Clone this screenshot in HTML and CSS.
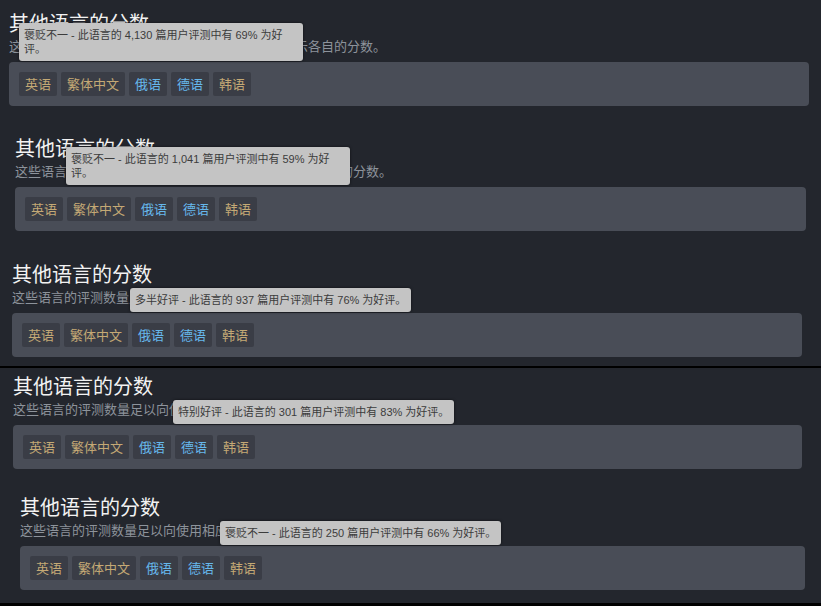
FILE: index.html
```html
<!DOCTYPE html>
<html lang="zh-CN">
<head>
    <meta charset="UTF-8">
    <meta name="viewport" content="width=device-width, initial-scale=1.0">
    <title>其他语言的分数</title>
    <link rel="stylesheet" href="styles.css">
</head>
<body>
    <div class="page">
        <!-- 截图 1 -->
        <section class="shot shot-1">
            <h2 class="title">其他语言的分数</h2>
            <p class="desc">这些语言的评测数量足以向使用相应语言的用户显示各自的分数。</p>
            <div class="langs">
                <span class="lang gold">英语</span>
                <span class="lang gold">繁体中文</span>
                <span class="lang blue">俄语</span>
                <span class="lang blue">德语</span>
                <span class="lang gold">韩语</span>
            </div>
            <div class="tip tip-wrap">褒贬不一 - 此语言的 4,130 篇用户评测中有 69% 为好评。</div>
        </section>

        <!-- 截图 2 -->
        <section class="shot shot-2">
            <h2 class="title">其他语言的分数</h2>
            <p class="desc">这些语言的评测数量足以向使用相应语言的用户显示各自的分数。</p>
            <div class="langs">
                <span class="lang gold">英语</span>
                <span class="lang gold">繁体中文</span>
                <span class="lang blue">俄语</span>
                <span class="lang blue">德语</span>
                <span class="lang gold">韩语</span>
            </div>
            <div class="tip tip-wrap">褒贬不一 - 此语言的 1,041 篇用户评测中有 59% 为好评。</div>
        </section>

        <!-- 截图 3 -->
        <section class="shot shot-3">
            <h2 class="title">其他语言的分数</h2>
            <p class="desc">这些语言的评测数量足以向使用相应语言的用户显示各自的分数。</p>
            <div class="langs">
                <span class="lang gold">英语</span>
                <span class="lang gold">繁体中文</span>
                <span class="lang blue">俄语</span>
                <span class="lang blue">德语</span>
                <span class="lang gold">韩语</span>
            </div>
            <div class="tip">多半好评 - 此语言的 937 篇用户评测中有 76% 为好评。</div>
        </section>

        <!-- 截图 4 -->
        <section class="shot shot-4">
            <h2 class="title">其他语言的分数</h2>
            <p class="desc">这些语言的评测数量足以向使用相应语言的用户显示各自的分数。</p>
            <div class="langs">
                <span class="lang gold">英语</span>
                <span class="lang gold">繁体中文</span>
                <span class="lang blue">俄语</span>
                <span class="lang blue">德语</span>
                <span class="lang gold">韩语</span>
            </div>
            <div class="tip">特别好评 - 此语言的 301 篇用户评测中有 83% 为好评。</div>
        </section>

        <!-- 截图 5 -->
        <section class="shot shot-5">
            <h2 class="title">其他语言的分数</h2>
            <p class="desc">这些语言的评测数量足以向使用相应语言的用户显示各自的分数。</p>
            <div class="langs">
                <span class="lang gold">英语</span>
                <span class="lang gold">繁体中文</span>
                <span class="lang blue">俄语</span>
                <span class="lang blue">德语</span>
                <span class="lang gold">韩语</span>
            </div>
            <div class="tip">褒贬不一 - 此语言的 250 篇用户评测中有 66% 为好评。</div>
        </section>
    </div>
</body>
</html>
```

FILE: styles.css
```css
body {
    margin: 0;
    background-color: #000;
    font-family: "Liberation Sans", Arial, "Noto Sans CJK SC", sans-serif;
}
.page {
    width: 821px;
    height: 606px;
    overflow: hidden;
    background-color: #000;
}
.shot {
    position: relative;
    box-sizing: border-box;
    background-color: #23262d;
}
.shot-1 {
    height: 120px;
    padding: 9px 12px 0 9px;
}
.shot-2 {
    height: 125px;
    padding: 14px 15px 0 15px;
}
.shot-3 {
    height: 121px;
    padding: 15px 19px 0 12px;
    margin-bottom: 2px;
}
.shot-4 {
    height: 112px;
    padding: 4px 19px 0 13px;
}
.shot-5 {
    height: 123px;
    padding: 13px 16px 0 20px;
}
.title {
    margin: 0;
    font-family: "Noto Sans CJK SC", sans-serif;
    font-size: 20px;
    font-weight: normal;
    line-height: 28px;
    color: #f2f2f2;
}
.desc {
    margin: 0;
    font-family: "Noto Sans CJK SC", sans-serif;
    font-size: 13px;
    line-height: 18px;
    color: #8d939b;
}
.langs {
    display: flex;
    gap: 4px;
    margin-top: 7px;
    padding: 10px;
    border-radius: 4px;
    background-color: #494d57;
}
.lang {
    padding: 0 6px;
    height: 24px;
    line-height: 24px;
    border-radius: 2px;
    background-color: #3a3d46;
    font-family: "Noto Sans CJK SC", sans-serif;
    font-size: 13px;
}
.gold {
    color: #c4a975;
}
.blue {
    color: #66b8ec;
}
.tip {
    position: absolute;
    box-sizing: border-box;
    padding: 5px 5px;
    border-radius: 3px;
    background-color: #c4c4c4;
    box-shadow: 0 0 3px rgba(0, 0, 0, 0.6);
    color: #3c3c3c;
    font-size: 11px;
    line-height: 14px;
    white-space: nowrap;
}
.tip-wrap {
    width: 284px;
    white-space: normal;
}
.shot-1 .tip {
    left: 19px;
    top: 23px;
}
.shot-2 .tip {
    left: 66px;
    top: 27px;
}
.shot-3 .tip {
    left: 130px;
    top: 43px;
}
.shot-4 .tip {
    left: 173px;
    top: 32px;
}
.shot-5 .tip {
    left: 220px;
    top: 41px;
}
```
